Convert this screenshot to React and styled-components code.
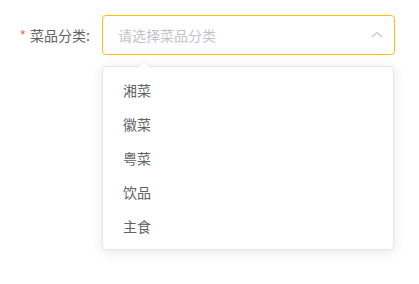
import React from "react";
import styled, { createGlobalStyle } from "styled-components";

const GlobalStyle = createGlobalStyle`
  body {
    margin: 0;
    background: #fff;
    font-family: "Helvetica Neue", "Noto Sans CJK SC", "Liberation Sans", sans-serif;
  }
`;

const options = ["湘菜", "徽菜", "粤菜", "饮品", "主食"];

export default function App() {
  return (
    <>
      <GlobalStyle />
      <Page>
        <FormItem>
          <Label>
            <Star>*</Star>菜品分类:
          </Label>
          <SelectWrap>
            <Input>
              <Placeholder>请选择菜品分类</Placeholder>
              <Arrow viewBox="0 0 12 12">
                <path d="M1 8 L6 3.5 L11 8" fill="none" stroke="#c0c4cc" strokeWidth="1.1" />
              </Arrow>
            </Input>
            <Dropdown>
              <Caret />
              {options.map((o) => (
                <Item key={o}>{o}</Item>
              ))}
            </Dropdown>
          </SelectWrap>
        </FormItem>
      </Page>
    </>
  );
}

const Page = styled.div`
  padding: 15px 24px 0 0;
  height: 284px;
  box-sizing: border-box;
`;

const FormItem = styled.div`
  display: flex;
  align-items: flex-start;
`;

const Label = styled.label`
  width: 102px;
  box-sizing: border-box;
  padding-right: 12px;
  text-align: right;
  line-height: 40px;
  font-size: 14px;
  color: #606266;
`;

const Star = styled.span`
  color: #f56c6c;
  margin-right: 4px;
`;

const SelectWrap = styled.div`
  position: relative;
  flex: 1;
`;

const Input = styled.div`
  height: 40px;
  box-sizing: border-box;
  border: 1px solid #ffc107;
  border-radius: 4px;
  padding: 0 15px;
  display: flex;
  align-items: center;
  justify-content: space-between;
`;

const Placeholder = styled.span`
  font-size: 14px;
  color: #c0c4cc;
`;

const Arrow = styled.svg`
  width: 12px;
  height: 12px;
  margin-right: -4px;
`;

const Dropdown = styled.ul`
  position: absolute;
  top: 51px;
  left: 0;
  right: 1px;
  margin: 0;
  padding: 6px 0;
  list-style: none;
  background: #fff;
  border: 1px solid #e4e7ed;
  border-radius: 4px;
  box-shadow: 0 2px 12px rgba(0, 0, 0, 0.1);
`;

const Caret = styled.div`
  position: absolute;
  top: -6px;
  left: 35px;
  width: 0;
  height: 0;
  border-left: 6px solid transparent;
  border-right: 6px solid transparent;
  border-bottom: 6px solid #ebeef5;
  &::after {
    content: "";
    position: absolute;
    top: 1px;
    left: -6px;
    border-left: 6px solid transparent;
    border-right: 6px solid transparent;
    border-bottom: 6px solid #fff;
  }
`;

const Item = styled.li`
  height: 34px;
  line-height: 34px;
  padding: 0 20px;
  font-size: 14px;
  color: #606266;
`;
